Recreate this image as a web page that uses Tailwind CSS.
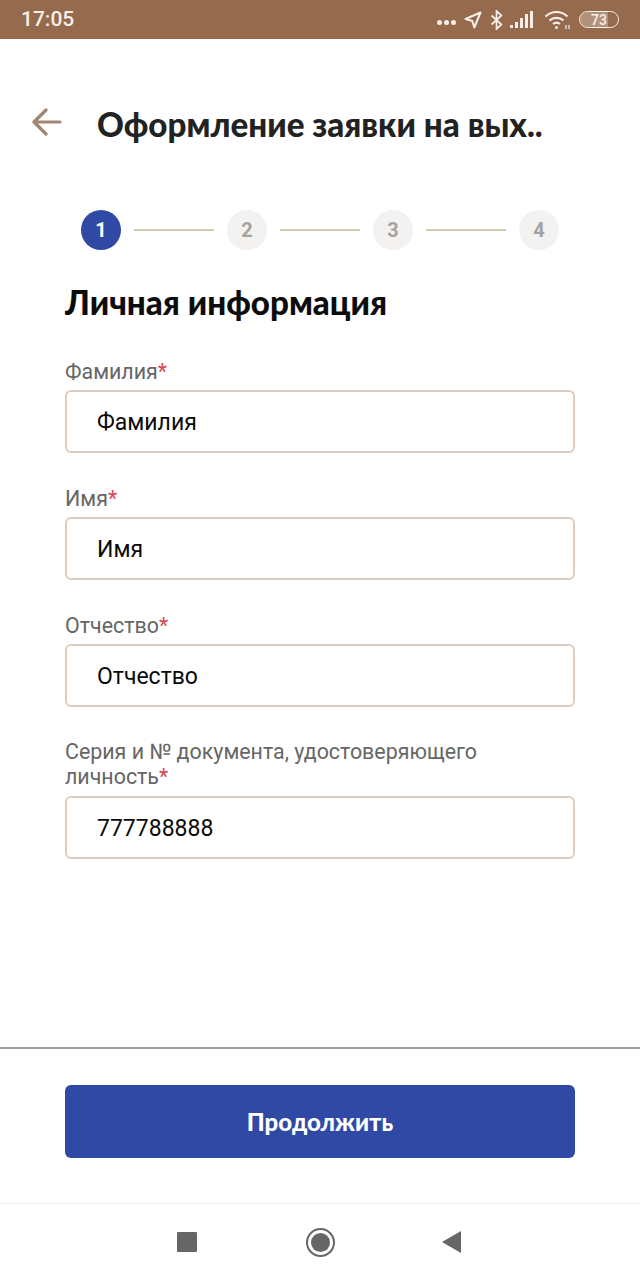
<!DOCTYPE html>
<html lang="ru">
<head>
  <meta charset="UTF-8" />
  <meta name="viewport" content="width=device-width, initial-scale=1.0"/>
  <title>Оформление заявки</title>
  <script src="https://cdn.jsdelivr.net/npm/@tailwindcss/browser@4"></script>
</head>
<body class="bg-white h-[1280px] w-[640px] overflow-hidden flex flex-col font-['Roboto',sans-serif]">

  <!-- Status bar -->
  <div class="h-[39px] bg-[#966a4c] flex items-center justify-between pl-[21px] pr-[21px] text-[#f7efe9] shrink-0">
    <span class="text-[21px] font-medium leading-none">17:05</span>
    <div class="flex items-center">
      <div class="flex gap-[2px] mr-[8px] mt-[6px]">
        <span class="w-[5px] h-[5px] rounded-full bg-[#f7efe9]"></span>
        <span class="w-[5px] h-[5px] rounded-full bg-[#f7efe9]"></span>
        <span class="w-[5px] h-[5px] rounded-full bg-[#f7efe9]"></span>
      </div>
      <svg class="w-[18px] h-[18px] mr-[8px]" viewBox="0 0 18 18" fill="none" stroke="#f7efe9" stroke-width="2" stroke-linejoin="round"><path d="M16.5 1.5 1.5 8l6.8 2 2 6.500z"/></svg>
      <svg class="w-[13px] h-[20px] mr-[7px]" viewBox="0 0 12 20" fill="none" stroke="#f7efe9" stroke-width="1.7"><path d="M1 5.5l10 9-5 4.5V1l5 4.5-10 9"/></svg>
      <div class="flex items-end gap-[2px] h-[17px] mr-[11px]">
        <span class="w-[3px] h-[3px] bg-[#f7efe9]"></span>
        <span class="w-[3px] h-[6px] bg-[#f7efe9]"></span>
        <span class="w-[3px] h-[10px] bg-[#f7efe9]"></span>
        <span class="w-[3px] h-[14px] bg-[#f7efe9]"></span>
        <span class="w-[3px] h-[17px] bg-[#f7efe9]"></span>
      </div>
      <svg class="w-[27px] h-[20px] mr-[8px]" viewBox="0 0 27 20" fill="none" stroke="#f7efe9" stroke-width="2.2"><path d="M1.5 6.5c6.500-6 15.500-6 22 0"/><path d="M5.500 10.500c4-3.500 10-3.500 14 0"/><path d="M9 14c2-1.600 5-1.600 7 0"/><circle cx="12.500" cy="17.500" r="1.500" fill="#f7efe9" stroke="none"/><path d="M22 15v4M25 15v4" stroke-width="1.200"/></svg>
      <div class="w-[40px] h-[17px] rounded-full border-[1.500px] border-[#f7efe9] relative overflow-hidden flex items-center justify-center">
        <span class="absolute inset-y-0 left-0 w-[73%] bg-[#f7efe9]/30"></span>
        <span class="relative text-[14px] font-medium leading-none">73</span>
      </div>
    </div>
  </div>

  <!-- Header -->
  <div class="h-[171px] shrink-0 flex items-start pl-[32px] pt-[64px]">
    <svg class="w-[30px] h-[30px] mt-[4px]" viewBox="0 0 30 30" fill="none" stroke="#a38671" stroke-width="3.200" stroke-linecap="round" stroke-linejoin="round"><path d="M28 15H2M14 3 2 15l12 12"/></svg>
    <h1 class="ml-[35px] -mt-[1px] text-[33.2px] leading-[44px] font-black text-[#222222] font-['Lato','Noto_Sans',sans-serif] whitespace-nowrap">Оформление заявки на вых..</h1>
  </div>

  <!-- Steps -->
  <div class="flex items-center pl-[81px] h-[40px] shrink-0">
    <span class="w-[40px] h-[40px] rounded-full bg-[#2f49a5] text-white flex items-center justify-center font-bold text-[20px]">1</span>
    <span class="w-[80px] h-[2px] bg-[#d3ccb5] mx-[13px]"></span>
    <span class="w-[40px] h-[40px] rounded-full bg-[#f3f2f0] text-[#a3a3a3] flex items-center justify-center font-bold text-[20px]">2</span>
    <span class="w-[80px] h-[2px] bg-[#d3ccb5] mx-[13px]"></span>
    <span class="w-[40px] h-[40px] rounded-full bg-[#f3f2f0] text-[#a3a3a3] flex items-center justify-center font-bold text-[20px]">3</span>
    <span class="w-[80px] h-[2px] bg-[#d3ccb5] mx-[13px]"></span>
    <span class="w-[40px] h-[40px] rounded-full bg-[#f3f2f0] text-[#a3a3a3] flex items-center justify-center font-bold text-[20px]">4</span>
  </div>

  <!-- Form -->
  <main class="px-[65px] flex-1">
    <h2 class="mt-[30px] text-[33.2px] leading-[44px] font-black text-[#0c0c0c] font-['Lato','Noto_Sans',sans-serif]">Личная информация</h2>

    <div class="mt-[35px]">
      <label class="block text-[21.4px] leading-[25px] text-[#666666]">Фамилия<span class="text-[#d9484f]">*</span></label>
      <div class="mt-[6px] h-[63px] border-2 border-[#dccdc0] rounded-[6px] flex items-center pl-[30px] pt-[3px] text-[23px] text-[#0a0a0a]">Фамилия</div>
    </div>
    <div class="mt-[33px]">
      <label class="block text-[21.4px] leading-[25px] text-[#666666]">Имя<span class="text-[#d9484f]">*</span></label>
      <div class="mt-[6px] h-[63px] border-2 border-[#dccdc0] rounded-[6px] flex items-center pl-[30px] pt-[3px] text-[23px] text-[#0a0a0a]">Имя</div>
    </div>
    <div class="mt-[33px]">
      <label class="block text-[21.4px] leading-[25px] text-[#666666]">Отчество<span class="text-[#d9484f]">*</span></label>
      <div class="mt-[6px] h-[63px] border-2 border-[#dccdc0] rounded-[6px] flex items-center pl-[30px] pt-[3px] text-[23px] text-[#0a0a0a]">Отчество</div>
    </div>
    <div class="mt-[32px]">
      <label class="block text-[21.4px] leading-[25px] text-[#666666]">Серия и № документа, удостоверяющего<br>личность<span class="text-[#d9484f]">*</span></label>
      <div class="mt-[7px] h-[63px] border-2 border-[#dccdc0] rounded-[6px] flex items-center pl-[30px] pt-[3px] text-[23px] text-[#0a0a0a]">777788888</div>
    </div>
  </main>

  <!-- Bottom action -->
  <div class="h-[156px] border-t-2 border-[#9c9c9c] px-[65px] pt-[36px] shrink-0">
    <button class="w-full h-[73px] bg-[#2f49a5] rounded-[6px] text-white text-[24px] font-black font-['Lato','Noto_Sans',sans-serif]">Продолжить</button>
  </div>

  <!-- Android nav -->
  <div class="h-[77px] border-t border-[#eeeeee] flex items-center justify-center shrink-0 pr-[3px]">
    <span class="w-[20px] h-[20px] bg-[#666666] rounded-[1px]"></span>
    <span class="ml-[109px] w-[29px] h-[29px] rounded-full border-[2.500px] border-[#666666] flex items-center justify-center">
      <span class="w-[19px] h-[19px] rounded-full bg-[#666666]"></span>
    </span>
    <svg class="ml-[106px] w-[20px] h-[22px]" viewBox="0 0 20 22"><path d="M20 0v22L1 11z" fill="#666666"/></svg>
  </div>

</body>
</html>
